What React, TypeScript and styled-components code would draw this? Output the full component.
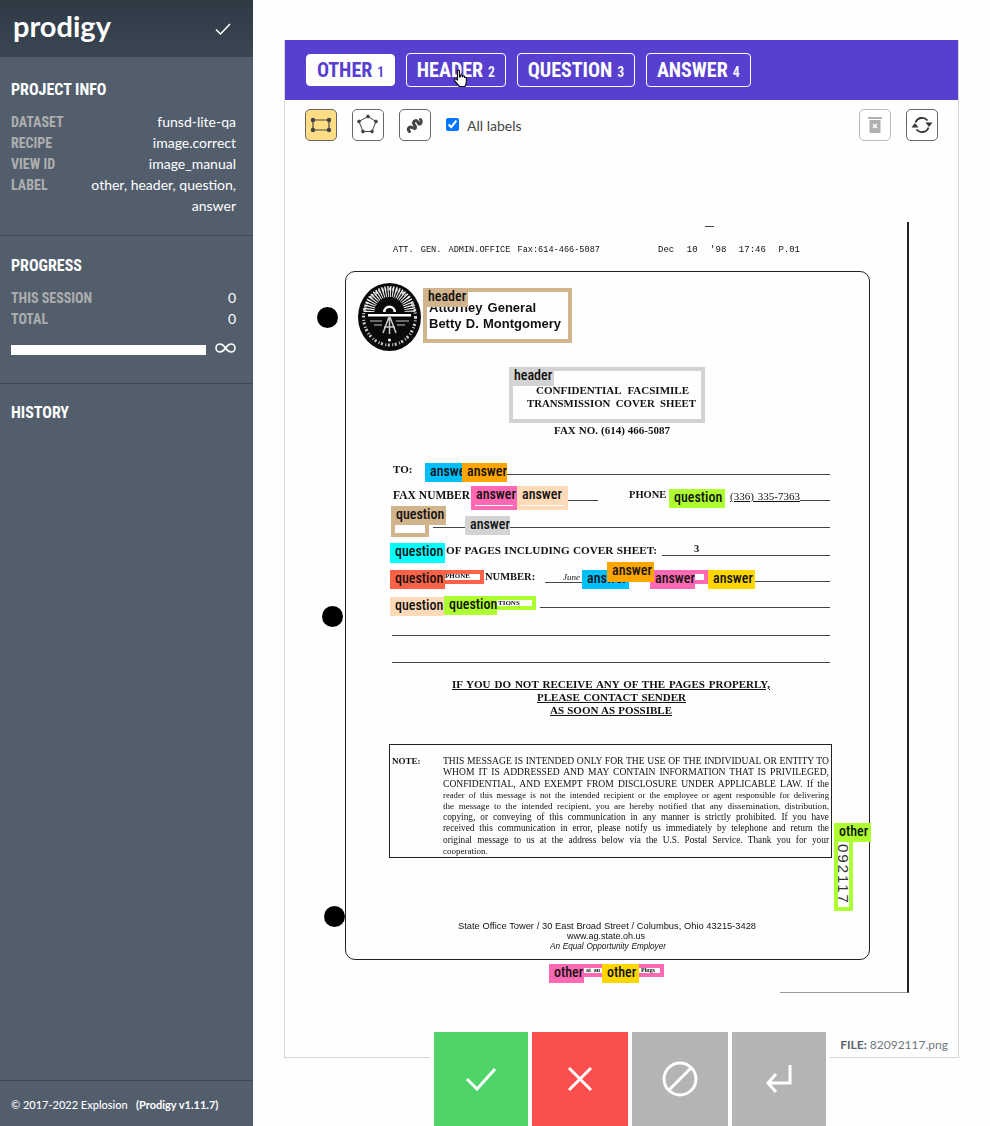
import React from 'react';
import styled, { createGlobalStyle, css } from 'styled-components';

const ORIGIN_X = 285;
const ORIGIN_Y = 150;
const CONDENSED = `'Roboto Condensed', 'Liberation Sans Narrow', Roboto, sans-serif`;

const Global = createGlobalStyle`
  html, body {
    margin: 0;
    height: 100%;
    background: #fefefe;
    font-family: Lato, sans-serif;
  }
  * { box-sizing: border-box; }
`;

const Shell = styled.div`
  display: flex;
  height: 1126px;
  overflow: hidden;
  position: relative;
`;

/* sidebar */
const Sidebar = styled.aside`
  width: 253px;
  flex: none;
  background: #535e6d;
  color: #fff;
  display: flex;
  flex-direction: column;
`;

const Brand = styled.div`
  height: 57px;
  padding: 0 22px 0 13px;
  display: flex;
  align-items: center;
  justify-content: space-between;
  background: linear-gradient(#2f3a45, #3b4653);
`;

const Logo = styled.div`
  font-size: 29px;
  font-weight: 700;
  line-height: 50px;
  margin-top: -6px;
`;

const Section = styled.section<{ $h?: number; $top?: number; $plain?: boolean }>`
  height: ${(p) => (p.$h ? `${p.$h}px` : 'auto')};
  padding: ${(p) => p.$top ?? 18}px 17px 0 11px;
  border-bottom: ${(p) => (p.$plain ? '0' : '1px solid #3c4757')};
`;

const SectionTitle = styled.h2`
  margin: 0 0 9px;
  font: 700 16px/24px ${CONDENSED};
  text-transform: uppercase;
`;

const Row = styled.div`
  display: flex;
  justify-content: space-between;
  align-items: baseline;
  font-size: 14px;
  line-height: 21px;
`;

const RowLabel = styled.span`
  flex: none;
  font: 700 14px/14px ${CONDENSED};
  color: #aeaeae;
  text-transform: uppercase;
`;

const RowValue = styled.span`
  text-align: right;
  max-width: 150px;
`;

const ProgressRow = styled.div`
  display: flex;
  align-items: center;
  justify-content: space-between;
  height: 21px;
  margin-top: 8px;
`;

const Track = styled.div`
  width: 195px;
  height: 10px;
  background: #fff;
  margin-top: 4px;
`;

const Spacer = styled.div`
  flex: 1;
`;

const Footer = styled.footer`
  height: 46px;
  padding-top: 17px;
  padding-left: 11px;
  border-top: 1px solid #3c4757;
  font-size: 11px;
  font-weight: 500;
  line-height: 14px;
  white-space: pre;
`;

/* main card */
const Main = styled.main`
  flex: 1;
  padding: 40px 31px 68px;
`;

const Card = styled.div`
  height: 100%;
  border: 1px solid #d6d6d6;
  background: #fefefe;
  display: flex;
  flex-direction: column;
  position: relative;
`;

const LabelBar = styled.div`
  height: 60px;
  margin: -1px 0 0;
  background: #583fcf;
  padding: 0 21px;
  display: flex;
  align-items: center;
  gap: 10.5px;
  position: relative;
`;

const LabelTab = styled.div<{ $active?: boolean }>`
  height: 34px;
  padding: 0 10px;
  border: 1px solid #fff;
  border-radius: 4px;
  display: flex;
  align-items: center;
  color: #fff;
  ${(p) =>
    p.$active &&
    css`
      background: #fff;
      color: #583fcf;
      height: 32px;
    `}
`;

const TabName = styled.span`
  font: 700 20px/1 ${CONDENSED};
`;

const TabKey = styled.span`
  font: 700 14px/1 ${CONDENSED};
  margin-left: 5px;
  margin-top: 3px;
  opacity: 0.95;
`;

const PointerIcon = styled.svg`
  position: absolute;
  left: 168px;
  top: 29px;
`;

const Toolbar = styled.div`
  height: 50px;
  padding: 9px 20px 0;
  display: flex;
  align-items: flex-start;
  gap: 15px;
`;

const ToolButton = styled.div<{ $active?: boolean; $disabled?: boolean }>`
  width: 32px;
  height: 32px;
  border-radius: 5px;
  border: 1px solid ${(p) => (p.$disabled ? '#bbb' : '#666')};
  background: ${(p) => (p.$active ? '#ffdd85' : '#fff')};
  display: flex;
  align-items: center;
  justify-content: center;
`;

const LabelToggle = styled.label`
  display: flex;
  align-items: center;
  height: 32px;
  margin-right: auto;
  font-size: 14px;
  color: #444;
  gap: 8px;
`;

const Check = styled.input`
  width: 13px;
  height: 13px;
  margin: 0 0 2px;
`;

/* the scanned page, every piece sits at its place on the scan */
const Canvas = styled.div`
  flex: 1;
  position: relative;
  overflow: hidden;
`;

const ScanLine = styled.div<{
  $x: number;
  $y: number;
  $w: number;
  $size: number;
  $font?: 'serif' | 'sans' | 'mono';
  $italic?: boolean;
  $bold?: boolean;
  $under?: boolean;
}>`
  position: absolute;
  left: ${(p) => p.$x - ORIGIN_X}px;
  top: ${(p) => p.$y - ORIGIN_Y - 7}px;
  width: ${(p) => p.$w}px;
  line-height: 14px;
  height: 14px;
  overflow: hidden;
  font-size: ${(p) => p.$size}px;
  font-family: ${(p) =>
    p.$font === 'sans'
      ? `'Liberation Sans', sans-serif`
      : p.$font === 'mono'
        ? `'Liberation Mono', monospace`
        : `'Liberation Serif', serif`};
  font-weight: ${(p) => (p.$bold ? 700 : 400)};
  font-style: ${(p) => (p.$italic ? 'italic' : 'normal')};
  text-decoration: ${(p) => (p.$under ? 'underline' : 'none')};
  text-align: justify;
  text-align-last: justify;
  color: #111;
  filter: blur(0.3px);
`;

const Rule = styled.div<{ $x: number; $y: number; $w: number }>`
  position: absolute;
  left: ${(p) => p.$x - ORIGIN_X}px;
  top: ${(p) => p.$y - ORIGIN_Y}px;
  width: ${(p) => p.$w}px;
  height: 1px;
  background: #444;
`;

const Frame = styled.div<{ $x: number; $y: number; $w: number; $h: number; $radius: number }>`
  position: absolute;
  left: ${(p) => p.$x - ORIGIN_X}px;
  top: ${(p) => p.$y - ORIGIN_Y}px;
  width: ${(p) => p.$w}px;
  height: ${(p) => p.$h}px;
  border: 1.5px solid #222;
  border-radius: ${(p) => p.$radius}px;
`;

const PageEdge = styled.div`
  position: absolute;
  left: ${780 - ORIGIN_X}px;
  top: ${222 - ORIGIN_Y}px;
  width: 129px;
  height: 771px;
  border-right: 2px solid #222;
  border-bottom: 1px solid #999;
`;

const Hole = styled.div<{ $x: number; $y: number }>`
  position: absolute;
  left: ${(p) => p.$x - 10 - ORIGIN_X}px;
  top: ${(p) => p.$y - 10 - ORIGIN_Y}px;
  width: 21px;
  height: 21px;
  border-radius: 50%;
  background: #000;
`;

const Seal = styled.svg`
  position: absolute;
  left: ${358 - ORIGIN_X}px;
  top: ${283 - ORIGIN_Y}px;
`;

const Stamp = styled.div`
  position: absolute;
  left: ${838 - ORIGIN_X}px;
  top: ${842 - ORIGIN_Y}px;
  width: 11px;
  height: 65px;
  overflow: hidden;
`;

const StampText = styled.div`
  font: 15px/11px 'Liberation Sans', sans-serif;
  letter-spacing: 2px;
  transform: rotate(90deg) translate(2px, -11px);
  transform-origin: left top;
  white-space: nowrap;
  color: #333;
`;

const Box = styled.div<{ $x: number; $y: number; $w: number; $h: number; $color: string }>`
  position: absolute;
  left: ${(p) => p.$x - ORIGIN_X}px;
  top: ${(p) => p.$y - ORIGIN_Y}px;
  width: ${(p) => p.$w}px;
  height: ${(p) => p.$h}px;
  border: 4px solid ${(p) => p.$color};
`;

const BoxLabel = styled.div<{ $x: number; $y: number; $w: number; $color: string }>`
  position: absolute;
  left: ${(p) => p.$x - ORIGIN_X}px;
  top: ${(p) => p.$y - ORIGIN_Y}px;
  width: ${(p) => p.$w}px;
  height: 19px;
  background: ${(p) => p.$color};
  overflow: hidden;
  color: #111;
`;

const BoxLabelText = styled.span`
  display: block;
  font: 500 14px/16px ${CONDENSED};
  padding-left: 5px;
`;

const FileName = styled.div`
  position: absolute;
  right: 10px;
  bottom: 4px;
  font-size: 12px;
  line-height: 16px;
  color: #6e7780;
`;

const FileKey = styled.span`
  font-weight: 700;
  color: #59636d;
`;

/* accept, reject, ignore, undo: float above the bottom of the card */
const Actions = styled.div`
  position: absolute;
  left: 430px;
  bottom: 0;
  width: 400px;
  height: 94px;
  padding: 0 4px;
  background: #fefefe;
  display: flex;
  gap: 4px;
`;

const ActionButton = styled.div<{ $color: string; $w: number }>`
  width: ${(p) => p.$w}px;
  height: 100%;
  background: ${(p) => p.$color};
  display: flex;
  align-items: center;
  justify-content: center;
`;

const TAN = '#d2b48c';
const GREY = '#d3d3d3';
const BLUE = '#00bfff';
const ORANGE = '#ffa500';
const PINK = '#ff69b4';
const PEACH = '#ffdab9';
const CYAN = '#00ffff';
const TOMATO = '#ff6347';
const GREEN = '#adff2f';
const GOLD = '#ffd700';

type Mark = { x: number; y: number; w: number; h: number; color: string; label: string; labelW: number };

const marks: Mark[] = [
  { x: 423, y: 288, w: 149, h: 55, color: TAN, label: 'header', labelW: 45 },
  { x: 509, y: 367, w: 196, h: 56, color: GREY, label: 'header', labelW: 45 },
  { x: 425, y: 463, w: 37, h: 19, color: BLUE, label: 'answer', labelW: 37 },
  { x: 462, y: 463, w: 45, h: 19, color: ORANGE, label: 'answer', labelW: 45 },
  { x: 471, y: 486, w: 46, h: 24, color: PINK, label: 'answer', labelW: 46 },
  { x: 517, y: 486, w: 51, h: 24, color: PEACH, label: 'answer', labelW: 51 },
  { x: 391, y: 506, w: 38, h: 31, color: TAN, label: 'question', labelW: 55 },
  { x: 465, y: 516, w: 45, h: 18, color: GREY, label: 'answer', labelW: 45 },
  { x: 390, y: 543, w: 55, h: 20, color: CYAN, label: 'question', labelW: 55 },
  { x: 390, y: 570, w: 94, h: 14, color: TOMATO, label: 'question', labelW: 55 },
  { x: 390, y: 597, w: 54, h: 19, color: PEACH, label: 'question', labelW: 54 },
  { x: 444, y: 596, w: 92, h: 14, color: GREEN, label: 'question', labelW: 53 },
  { x: 669, y: 489, w: 56, h: 19, color: GREEN, label: 'question', labelW: 56 },
  { x: 582, y: 570, w: 47, h: 19, color: BLUE, label: 'answer', labelW: 47 },
  { x: 650, y: 570, w: 58, h: 14, color: PINK, label: 'answer', labelW: 45 },
  { x: 607, y: 562, w: 47, h: 20, color: ORANGE, label: 'answer', labelW: 47 },
  { x: 708, y: 570, w: 47, h: 19, color: GOLD, label: 'answer', labelW: 47 },
  { x: 834, y: 823, w: 19, h: 88, color: GREEN, label: 'other', labelW: 37 },
  { x: 549, y: 964, w: 115, h: 13, color: PINK, label: 'other', labelW: 35 },
  { x: 602, y: 964, w: 37, h: 19, color: GOLD, label: 'other', labelW: 37 },
];

const noteLines = [
  { y: 761, size: 9.6, text: 'THIS MESSAGE IS INTENDED ONLY FOR THE USE OF THE INDIVIDUAL OR ENTITY TO' },
  { y: 772, size: 9.6, text: 'WHOM IT IS ADDRESSED AND MAY CONTAIN INFORMATION THAT IS PRIVILEGED,' },
  { y: 784, size: 9.6, text: 'CONFIDENTIAL, AND EXEMPT FROM DISCLOSURE UNDER APPLICABLE LAW.  If the' },
  { y: 795, size: 8.7, text: 'reader of this message is not the intended recipient or the employee or agent responsible for delivering' },
  { y: 806, size: 9.1, text: 'the message to the intended recipient, you are hereby notified that any dissemination, distribution,' },
  { y: 817, size: 9.3, text: 'copying, or conveying of this communication in any manner is strictly prohibited.  If you have' },
  { y: 828, size: 9.3, text: 'received this communication in error, please notify us immediately by telephone and return the' },
  { y: 840, size: 9.3, text: 'original message to us at the address below via the U.S. Postal Service.  Thank you for your' },
];

const rules = [
  { x: 705, y: 226, w: 9 },
  { x: 505, y: 474, w: 325 },
  { x: 568, y: 500, w: 30 },
  { x: 800, y: 500, w: 30 },
  { x: 433, y: 527, w: 397 },
  { x: 662, y: 555, w: 168 },
  { x: 545, y: 582, w: 37 },
  { x: 755, y: 581, w: 75 },
  { x: 540, y: 607, w: 290 },
  { x: 392, y: 635, w: 438 },
  { x: 392, y: 662, w: 438 },
];

const SealDrawing = () => (
  <Seal width="63" height="68" viewBox="0 0 63 68">
    <ellipse cx="31.5" cy="34" rx="31.5" ry="34" fill="#0a0a0a" />
    <ellipse cx="31.5" cy="34" rx="26" ry="28" fill="none" stroke="#ccc" strokeWidth="3" strokeDasharray="2 1.5 1 2.500" />
    <path d="M11 29a20.500 20.500 0 0 1 41 0" fill="none" stroke="#eee" strokeWidth="11" strokeDasharray="1.200 1.300" />
    <path d="M22 29a9.500 9.500 0 0 1 19 0z" fill="#0a0a0a" />
    <path d="M25 29a6.500 6.500 0 0 1 13 0h-2.500a4 4 0 0 0-8 0z" fill="#fff" />
    <rect x="10" y="31" width="43" height="2.500" fill="#fff" />
    <path d="M31 34l-6 16M32 34l6 16M26 44h11M31.500 34v17" stroke="#ccc" strokeWidth="1.500" fill="none" />
    <path d="M12 38h12M38 38h13M16 42h8M39 42h8" stroke="#888" strokeWidth="1.500" />
    <circle cx="31.500" cy="57" r="1.500" fill="#fff" />
  </Seal>
);

const App = () => {
  return (
    <Shell>
      <Global />
      <Sidebar>
        <Brand>
          <Logo>prodigy</Logo>
          <svg width="16" height="12" viewBox="0 0 16 12" fill="none" stroke="#fff" strokeWidth="1.5">
            <path d="M1 6.500l4.500 4.500L15 1" />
          </svg>
        </Brand>
        <Section $h={179} $top={21}>
          <SectionTitle>Project Info</SectionTitle>
          <Row><RowLabel>Dataset</RowLabel><RowValue>funsd-lite-qa</RowValue></Row>
          <Row><RowLabel>Recipe</RowLabel><RowValue>image.correct</RowValue></Row>
          <Row><RowLabel>View ID</RowLabel><RowValue>image_manual</RowValue></Row>
          <Row><RowLabel>Label</RowLabel><RowValue>other, header, question, answer</RowValue></Row>
        </Section>
        <Section $h={148}>
          <SectionTitle>Progress</SectionTitle>
          <Row><RowLabel>This session</RowLabel><RowValue>0</RowValue></Row>
          <Row><RowLabel>Total</RowLabel><RowValue>0</RowValue></Row>
          <ProgressRow>
            <Track />
            <svg width="21" height="10" viewBox="0 0 21 10" fill="none" stroke="#fff" strokeWidth="1.600">
              <path d="M10.500 5C8.500 2 7 1 5 1a4 4 0 0 0 0 8c2 0 3.500-1 5.500-4s3.500-4 5.500-4a4 4 0 0 1 0 8c-2 0-3.500-1-5.500-4z" />
            </svg>
          </ProgressRow>
        </Section>
        <Section $plain $top={17}>
          <SectionTitle>History</SectionTitle>
        </Section>
        <Spacer />
        <Footer>{'© 2017-2022 Explosion   '}<b>(Prodigy v1.11.7)</b></Footer>
      </Sidebar>

      <Main>
        <Card>
          <LabelBar>
            <LabelTab $active><TabName>OTHER</TabName><TabKey>1</TabKey></LabelTab>
            <LabelTab><TabName>HEADER</TabName><TabKey>2</TabKey></LabelTab>
            <LabelTab><TabName>QUESTION</TabName><TabKey>3</TabKey></LabelTab>
            <LabelTab><TabName>ANSWER</TabName><TabKey>4</TabKey></LabelTab>
            <PointerIcon width="16" height="20" viewBox="0 0 16 20">
              <path
                d="M4.500 1.500c.8-.8 2-.4 2 .8V8l1-.3V6.500c.6-.8 1.700-.6 1.900.3l.1 1 .2-.6c.7-.7 1.700-.4 1.800.5l.1.800c.8-.5 1.800-.1 1.900.9l-.2 4.600-1.300 3.500H6.500L1.800 12c-.8-1-.5-2.200.6-2.200.8 0 1.400.6 2.100 1.200z"
                fill="#fff"
                stroke="#111"
                strokeWidth="1.200"
                strokeLinejoin="round"
              />
            </PointerIcon>
          </LabelBar>

          <Toolbar>
            <ToolButton $active>
              <svg width="22" height="22" viewBox="0 0 22 22" fill="#444" stroke="#444" strokeWidth="1.200">
                <path d="M3 6h16M3 16h16M3 6v10M19 6v10" fill="none" />
                <circle cx="3" cy="6" r="1.600" />
                <circle cx="19" cy="6" r="1.600" />
                <circle cx="3" cy="16" r="1.600" />
                <circle cx="19" cy="16" r="1.600" />
              </svg>
            </ToolButton>
            <ToolButton>
              <svg width="22" height="22" viewBox="0 0 22 22" fill="#444" stroke="#444" strokeWidth="1">
                <path d="M11 2.500L19 7.500l-4 10H6l-4-10z" fill="none" />
                <circle cx="11" cy="2.500" r="1.400" />
                <circle cx="19" cy="7.500" r="1.400" />
                <circle cx="15" cy="17.500" r="1.400" />
                <circle cx="6" cy="17.500" r="1.400" />
                <circle cx="2" cy="7.500" r="1.400" />
              </svg>
            </ToolButton>
            <ToolButton>
              <svg width="22" height="22" viewBox="0 0 22 22" fill="none" stroke="#444" strokeWidth="3" strokeLinecap="round" strokeLinejoin="round">
                <path d="M5.500 17.500C3 15 5 12 8 13.500c2 1 3.500 1.500 3.500-.5 0-2-2.500-2-2-4.500.5-2 3-2.500 4-1 1 1.500 1 3 2.500 2.500 1.500-.5 1.500-3 .5-4.500" />
              </svg>
            </ToolButton>
            <LabelToggle>
              <Check type="checkbox" defaultChecked readOnly />
              All labels
            </LabelToggle>
            <ToolButton $disabled>
              <svg width="14" height="18" viewBox="0 0 14 18" fill="#b0b0b0">
                <rect x="0" y="1" width="14" height="2" />
                <rect x="1.500" y="4" width="11" height="13" />
                <path d="M5 8l4 4M9 8l-4 4" stroke="#fff" strokeWidth="1.500" />
              </svg>
            </ToolButton>
            <ToolButton>
              <svg width="22" height="22" viewBox="0 0 22 22" fill="#333">
                <path d="M4.500 8.500a7 7 0 0 1 12-2" fill="none" stroke="#333" strokeWidth="1.800" />
                <path d="M17.500 13.500a7 7 0 0 1-12 2" fill="none" stroke="#333" strokeWidth="1.800" />
                <path d="M14.500 8.500h7L18 13z" />
                <path d="M.5 13.500h7L4 9z" />
              </svg>
            </ToolButton>
          </Toolbar>

          <Canvas>
            <PageEdge />
            <Frame $x={345} $y={271} $w={525} $h={689} $radius={10} />
            <Frame $x={389} $y={744} $w={443} $h={114} $radius={0} />
            <Hole $x={327} $y={317} />
            <Hole $x={332} $y={616} />
            <Hole $x={334} $y={916} />
            <SealDrawing />

            <ScanLine $x={393} $y={250} $w={207} $size={8.6} $font="mono">ATT. GEN. ADMIN.OFFICE Fax:614-466-5087</ScanLine>
            <ScanLine $x={658} $y={250} $w={142} $size={9} $font="mono">Dec 10 '98   17:46    P.01</ScanLine>
            <ScanLine $x={429} $y={308} $w={107} $size={13} $font="sans" $bold>Attorney General</ScanLine>
            <ScanLine $x={429} $y={324} $w={132} $size={13} $font="sans" $bold>Betty D. Montgomery</ScanLine>
            <ScanLine $x={536} $y={390} $w={153} $size={11} $bold>CONFIDENTIAL FACSIMILE</ScanLine>
            <ScanLine $x={527} $y={403} $w={169} $size={10.8} $bold>TRANSMISSION COVER SHEET</ScanLine>
            <ScanLine $x={554} $y={430} $w={116} $size={11} $bold>FAX NO. (614) 466-5087</ScanLine>
            <ScanLine $x={393} $y={469} $w={21} $size={11} $bold>TO:</ScanLine>
            <ScanLine $x={393} $y={495} $w={77} $size={11.5} $bold>FAX NUMBER</ScanLine>
            <ScanLine $x={629} $y={495} $w={39} $size={10.5} $bold>PHONE</ScanLine>
            <ScanLine $x={730} $y={496} $w={70} $size={11} $under>(336) 335-7363</ScanLine>
            <ScanLine $x={446} $y={550} $w={211} $size={11.2} $bold>OF PAGES INCLUDING COVER SHEET:</ScanLine>
            <ScanLine $x={694} $y={549} $w={6} $size={10.5} $bold>3</ScanLine>
            <ScanLine $x={445} $y={576} $w={36} $size={7} $bold>PHONE</ScanLine>
            <ScanLine $x={485} $y={577} $w={53} $size={10.5} $bold>NUMBER:</ScanLine>
            <ScanLine $x={563} $y={577} $w={19} $size={9} $italic>June</ScanLine>
            <ScanLine $x={498} $y={603} $w={34} $size={7} $bold>TIONS</ScanLine>
            <ScanLine $x={452} $y={684} $w={318} $size={11} $bold $under>IF YOU DO NOT RECEIVE ANY OF THE PAGES PROPERLY,</ScanLine>
            <ScanLine $x={537} $y={697} $w={149} $size={11} $bold $under>PLEASE CONTACT SENDER</ScanLine>
            <ScanLine $x={550} $y={710} $w={122} $size={11} $bold $under>AS SOON AS POSSIBLE</ScanLine>
            <ScanLine $x={392} $y={761} $w={31} $size={9} $bold>NOTE:</ScanLine>
            {noteLines.map((line) => (
              <ScanLine key={line.y} $x={443} $y={line.y} $w={386} $size={line.size}>{line.text}</ScanLine>
            ))}
            <ScanLine $x={443} $y={851} $w={46} $size={9}>cooperation.</ScanLine>
            <ScanLine $x={458} $y={926} $w={298} $size={9.3} $font="sans">State Office Tower / 30 East Broad Street / Columbus, Ohio  43215-3428</ScanLine>
            <ScanLine $x={567} $y={936} $w={81} $size={9} $font="sans">www.ag.state.oh.us</ScanLine>
            <ScanLine $x={550} $y={947} $w={116} $size={8.2} $font="sans" $italic>An Equal Opportunity Employer</ScanLine>
            {rules.map((rule) => (
              <Rule key={`${rule.x}-${rule.y}`} $x={rule.x} $y={rule.y} $w={rule.w} />
            ))}

            <Stamp><StampText>092117</StampText></Stamp>
            {marks.map((mark) => (
              <React.Fragment key={`${mark.x}-${mark.y}`}>
                <Box $x={mark.x} $y={mark.y} $w={mark.w} $h={mark.h} $color={mark.color} />
                <BoxLabel $x={mark.x} $y={mark.y} $w={mark.labelW} $color={mark.color}>
                  <BoxLabelText>{mark.label}</BoxLabelText>
                </BoxLabel>
              </React.Fragment>
            ))}
            <ScanLine $x={586} $y={970} $w={14} $size={6} $bold>at an</ScanLine>
            <ScanLine $x={641} $y={970} $w={20} $size={6} $bold>Plugs</ScanLine>

            <FileName><FileKey>FILE:</FileKey> 82092117.png</FileName>
          </Canvas>
        </Card>
      </Main>

      <Actions>
        <ActionButton $color="#4fd469" $w={94}>
          <svg width="32" height="24" viewBox="0 0 32 24" fill="none" stroke="#fff" strokeWidth="3">
            <path d="M2 12l10 10L30 2" />
          </svg>
        </ActionButton>
        <ActionButton $color="#fb4e4e" $w={96}>
          <svg width="26" height="26" viewBox="0 0 26 26" fill="none" stroke="#fff" strokeWidth="3">
            <path d="M2 2l22 22M24 2L2 24" />
          </svg>
        </ActionButton>
        <ActionButton $color="#b4b4b4" $w={96}>
          <svg width="36" height="36" viewBox="0 0 36 36" fill="none" stroke="#fff" strokeWidth="3">
            <circle cx="18" cy="18" r="16" />
            <path d="M7 29L29 7" />
          </svg>
        </ActionButton>
        <ActionButton $color="#b4b4b4" $w={94}>
          <svg width="28" height="30" viewBox="0 0 28 30" fill="none" stroke="#fff" strokeWidth="3">
            <path d="M25 1v18H3M11 10l-8 9 8 9" />
          </svg>
        </ActionButton>
      </Actions>
    </Shell>
  );
};

export default App;
